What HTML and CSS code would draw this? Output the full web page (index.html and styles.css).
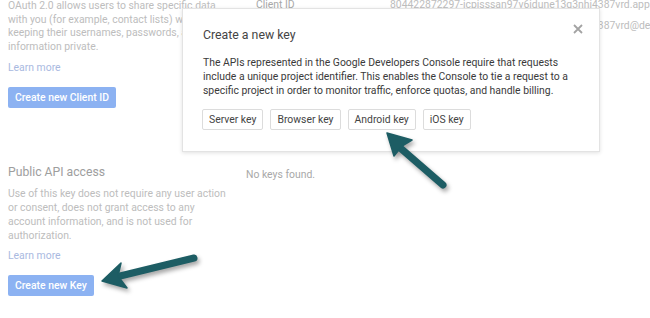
FILE: index.html
```html
<!DOCTYPE html>
<html lang="en">
<head>
    <meta charset="UTF-8">
    <meta name="viewport" content="width=device-width, initial-scale=1.0">
    <title>Credentials</title>
    <link rel="stylesheet" href="styles.css">
</head>
<body>
    <div class="page">
        <div class="section">
            <div class="side">
                <p class="desc oauth">OAuth 2.0 allows users to share specific data with you (for example, contact lists) while keeping their usernames, passwords, and other information private.</p>
                <a class="learn">Learn more</a>
                <button class="blue-btn">Create new Client ID</button>
            </div>
            <div class="main">
                <div class="row">
                    <span class="label">Client ID</span>
                    <span class="value">804422872297-icpisssan97v6idune13g3nhi4387vrd.apps.googleusercontent.com</span>
                </div>
                <div class="row">
                    <span class="label">Email address</span>
                    <span class="value">804422872297-icpisssan97v6idune13g3nhi4387vrd@developer.gserviceaccount.com</span>
                </div>
            </div>
        </div>

        <div class="section public">
            <div class="side">
                <h3>Public API access</h3>
                <p class="desc">Use of this key does not require any user action or consent, does not grant access to any account information, and is not used for authorization.</p>
                <a class="learn">Learn more</a>
                <button class="blue-btn">Create new Key</button>
            </div>
            <div class="main">
                <div class="empty">No keys found.</div>
            </div>
        </div>
    </div>

    <div class="dialog">
        <div class="dialog-head">
            <h2>Create a new key</h2>
            <svg class="close" width="10" height="10" viewBox="0 0 10 10">
                <path d="M1 1 L9 9 M9 1 L1 9" stroke="#a3a3a3" stroke-width="1.8"/>
            </svg>
        </div>
        <p class="dialog-text">The APIs represented in the Google Developers Console require that requests include a unique project identifier. This enables the Console to tie a request to a specific project in order to monitor traffic, enforce quotas, and handle billing.</p>
        <div class="key-buttons">
            <button class="key-btn">Server key</button>
            <button class="key-btn">Browser key</button>
            <button class="key-btn">Android key</button>
            <button class="key-btn">iOS key</button>
        </div>
    </div>

    <!-- annotation arrows -->
    <svg class="arrows" width="650" height="318" viewBox="0 0 650 318">
        <g fill="#1d5d64" stroke="#1d5d64" stroke-linejoin="round">
            <line x1="443" y1="185" x2="398" y2="146" stroke-width="7" stroke-linecap="round"/>
            <path d="M387 133 L412 140 L402 146 L394 156 Z" stroke-width="1.5"/>
            <line x1="194" y1="258" x2="116" y2="277" stroke-width="7" stroke-linecap="round"/>
            <path d="M102 281 L121 263 L118 276 L127 288 Z" stroke-width="1.5"/>
        </g>
    </svg>
</body>
</html>
```

FILE: styles.css
```css
body {
    margin: 0;
    padding: 0;
    font-family: Roboto, "Liberation Sans", Arial, sans-serif;
    background: #ffffff;
    width: 650px;
    height: 318px;
    overflow: hidden;
    position: relative;
}

.page {
    margin-top: -1px;
    padding-left: 8px;
}

.section {
    display: flex;
}

.side {
    width: 238px;
    flex-shrink: 0;
    display: flex;
    flex-direction: column;
    align-items: flex-start;
}

.desc {
    margin: 0;
    font-size: 10.4px;
    line-height: 14px;
    color: #bdbdbd;
    width: 224px;
}

.desc.oauth {
    line-height: 13.5px;
}

.learn {
    font-size: 10.4px;
    line-height: 14px;
    color: #a9b9df;
    margin-top: 8px;
}

.blue-btn {
    margin-top: 12px;
    height: 21px;
    padding: 0 7px;
    border: none;
    border-radius: 2px;
    background: #8cb2f2;
    color: #ffffff;
    font-family: Roboto, "Liberation Sans", Arial, sans-serif;
    font-size: 10.4px;
    font-weight: 500;
}

.public {
    margin-top: 56px;
}

.public h3 {
    margin: 0;
    font-size: 12.2px;
    line-height: 16px;
    font-weight: normal;
    color: #9e9e9e;
}

.public .desc {
    margin-top: 7px;
}

.public .learn {
    margin-top: 6px;
}

.main {
    flex: 1;
    min-width: 0;
    overflow: hidden;
    font-size: 10.4px;
    color: #bdbdbd;
    white-space: nowrap;
}

.row {
    display: flex;
    padding-left: 10px;
    line-height: 14px;
    margin-bottom: 7px;
}

.row:first-child {
    margin-top: -1px;
}

.label {
    width: 134px;
    flex-shrink: 0;
    color: #a8a8a8;
}

.empty {
    margin-top: 4px;
    line-height: 14px;
    color: #a8a8a8;
}

.dialog {
    position: absolute;
    left: 182px;
    top: 8px;
    width: 378px;
    height: 124px;
    padding: 18px 19px 0 19px;
    background: #ffffff;
    border: 1px solid #e3e3e3;
    box-shadow: 0 1px 4px rgba(0, 0, 0, 0.12);
}

.dialog-head {
    display: flex;
    justify-content: space-between;
    align-items: flex-start;
}

.dialog-head h2 {
    margin: 0;
    margin-left: 1px;
    font-size: 12.3px;
    line-height: 16px;
    font-weight: normal;
    color: #444444;
}

.close {
    margin-right: -3px;
    margin-top: -3px;
}

.dialog-text {
    margin: 13px 0 0 1px;
    font-size: 10.4px;
    line-height: 14px;
    color: #3a3a3a;
}

.key-buttons {
    display: flex;
    gap: 7px;
    margin-top: 11px;
}

.key-btn {
    height: 21px;
    padding: 0 6px;
    background: #ffffff;
    border: 1px solid #dcdcdc;
    border-radius: 2px;
    font-family: Roboto, "Liberation Sans", Arial, sans-serif;
    font-size: 10.4px;
    color: #444444;
}

.arrows {
    position: absolute;
    left: 0;
    top: 0;
    filter: drop-shadow(2px 3px 2px rgba(0, 0, 0, 0.35));
}
```
